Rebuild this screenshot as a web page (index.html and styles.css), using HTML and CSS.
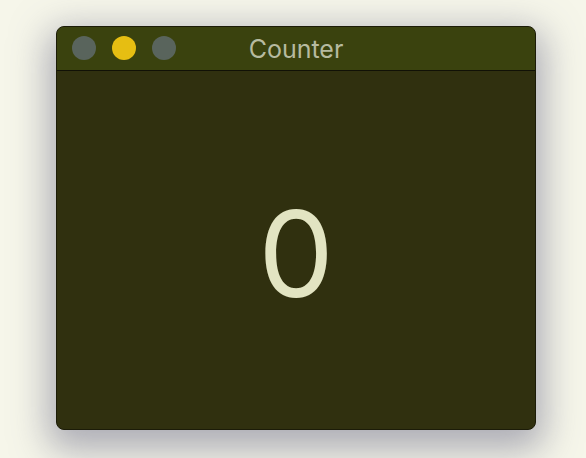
FILE: index.html
```html
<!DOCTYPE html>
<html>
<head>
<meta charset="utf-8">
<link rel="stylesheet" href="styles.css">
</head>
<body>
<div class="stage">
  <div class="window">
    <div class="titlebar">
      <div class="lights">
        <span class="light gray"></span>
        <span class="light yellow"></span>
        <span class="light gray"></span>
      </div>
      <div class="title">Counter</div>
    </div>
    <div class="content">
      <div class="count">0</div>
    </div>
  </div>
</div>
</body>
</html>
```
FILE: styles.css
```css
html, body {
  margin: 0;
  padding: 0;
  background: #f6f6ea;
  font-family: "Inter", "Liberation Sans", sans-serif;
}
.stage {
  width: 586px;
  height: 458px;
  padding: 26px 0 0 56px;
  box-sizing: border-box;
}
.window {
  width: 480px;
  height: 404px;
  border-radius: 8px;
  background: #30300f;
  border: 1px solid #1c1c08;
  box-sizing: border-box;
  overflow: hidden;
  display: flex;
  flex-direction: column;
  box-shadow: 0 12px 36px 8px rgba(100, 100, 130, 0.5);
}
.titlebar {
  height: 43px;
  flex: none;
  background: #3a420e;
  border-bottom: 1px solid #111106;
  position: relative;
  display: flex;
  align-items: center;
  justify-content: center;
}
.lights {
  position: absolute;
  left: 15px;
  top: 9px;
  display: flex;
  gap: 16px;
}
.light {
  width: 24px;
  height: 24px;
  border-radius: 50%;
}
.light.gray { background: #59645c; }
.light.yellow { background: #e6be12; }
.title {
  color: #b6baa0;
  font-size: 25px;
  padding-top: 0;
}
.content {
  flex: 1;
  display: flex;
  align-items: center;
  justify-content: center;
}
.count {
  color: #e2e4c2;
  font-size: 120px;
  line-height: 1;
  margin-top: 8px;
  font-weight: 400;
}
```
